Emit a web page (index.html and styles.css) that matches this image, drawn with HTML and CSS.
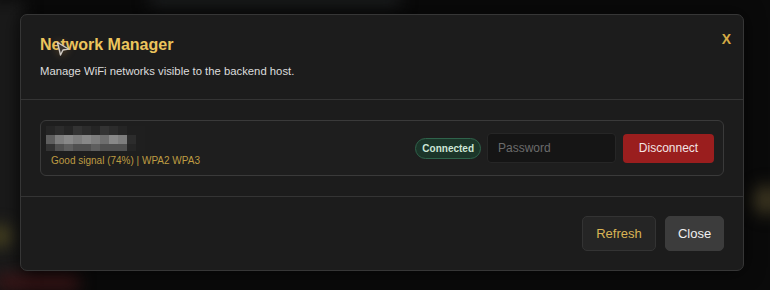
FILE: index.html
```html
<!DOCTYPE html>
<html lang="en">
<head>
<meta charset="utf-8">
<title>Network Manager</title>
<link rel="stylesheet" href="styles.css">
</head>
<body>
<div class="backdrop">
  <div class="blob blob-left"></div>
  <div class="blob blob-top"></div>
  <div class="blob blob-gold"></div>
  <div class="blob blob-red"></div>
  <div class="blob blob-right"></div>
</div>
<div class="modal">
  <div class="modal-header">
    <h2 class="title">Network Manager</h2>
    <p class="subtitle">Manage WiFi networks visible to the backend host.</p>
    <button class="x-btn">X</button>
  </div>
  <div class="modal-body">
    <div class="net-card">
      <div class="net-info">
        <div class="pixelated">
          <span class="c1"></span><span class="c2"></span><span class="c1"></span><span class="c3"></span><span class="c2"></span><span class="c1"></span><span class="c3"></span><span class="c2"></span><span class="c1"></span><span class="c0"></span><span class="c0"></span>
          <span class="c5"></span><span class="c7"></span><span class="c8"></span><span class="c7"></span><span class="c8"></span><span class="c7"></span><span class="c6"></span><span class="c8"></span><span class="c7"></span><span class="c2"></span><span class="c0"></span>
          <span class="c3"></span><span class="c4"></span><span class="c5"></span><span class="c4"></span><span class="c4"></span><span class="c5"></span><span class="c4"></span><span class="c4"></span><span class="c4"></span><span class="c1"></span><span class="c0"></span>
        </div>
        <div class="signal">Good signal (74%) | WPA2 WPA3</div>
      </div>
      <div class="net-actions">
        <span class="badge">Connected</span>
        <input class="pw" type="password" placeholder="Password">
        <button class="btn-danger">Disconnect</button>
      </div>
    </div>
  </div>
  <div class="modal-footer">
    <button class="btn btn-refresh">Refresh</button>
    <button class="btn btn-close">Close</button>
  </div>
  <div class="cursor">
    <svg width="14" height="16" viewBox="0 0 14 16"><path d="M1.5 1.5 L12.5 8 L7 9 L4.5 14 Z" fill="#3a3530" stroke="#cfcac4" stroke-width="1.4" stroke-linejoin="round"/></svg>
  </div>
</div>
</body>
</html>
```
FILE: styles.css
```css
* { box-sizing: border-box; }
html, body { margin: 0; padding: 0; }
body {
  width: 770px;
  height: 290px;
  overflow: hidden;
  background: #0a0a0a;
  font-family: "Liberation Sans", Arial, sans-serif;
  position: relative;
  padding: 14px 0 0 20px;
}
.backdrop { position: absolute; inset: 0; overflow: hidden; }
.blob { position: absolute; filter: blur(8px); }
.blob-left { left: -20px; top: 0; width: 45px; height: 290px; background: #1a1a1a; }
.blob-top { left: 150px; top: -10px; width: 250px; height: 18px; background: #1b1d1e; }
.blob-gold { left: -10px; top: 225px; width: 22px; height: 22px; background: #4a4420; border-radius: 50%; }
.blob-red { left: -5px; top: 274px; width: 85px; height: 16px; background: #3a1416; border-radius: 8px; }
.blob-right { left: 752px; top: 185px; width: 30px; height: 30px; background: #3a3420; border-radius: 50%; }

.modal {
  position: relative;
  width: 724px;
  height: 257px;
  background: #1c1c1c;
  border: 1px solid #363636;
  border-radius: 7px;
  display: flex;
  flex-direction: column;
  box-shadow: 0 0 20px rgba(0,0,0,0.6);
}
.modal-header {
  position: relative;
  padding: 20px 19px 19px;
  border-bottom: 1px solid #343434;
  height: 85px;
}
.title {
  margin: 0;
  font-size: 16px;
  line-height: 20px;
  font-weight: 700;
  color: #ecc55c;
}
.subtitle {
  margin: 9px 0 0;
  font-size: 11.3px;
  line-height: 14px;
  color: #dcdcdc;
}
.x-btn {
  position: absolute;
  top: 16px;
  right: 12px;
  background: none;
  border: 0;
  padding: 0;
  font-family: inherit;
  font-size: 14px;
  font-weight: 700;
  color: #d4aa45;
}
.modal-body {
  padding: 20px 19px;
  border-bottom: 1px solid #343434;
  height: 97px;
}
.net-card {
  height: 56px;
  border: 1px solid #3a3a3a;
  border-radius: 6px;
  background: #1e1e1e;
  display: flex;
  align-items: center;
  justify-content: space-between;
  padding: 0 9px 0 5px;
}
.net-info { display: flex; flex-direction: column; margin-top: -4px; }
.pixelated {
  display: grid;
  grid-template-columns: repeat(11, 9px);
  grid-template-rows: 9px 9px 7px;
  width: 99px;
}
.pixelated span { display: block; }
.c0 { background: #1f1f1f; }
.c1 { background: #252525; }
.c2 { background: #2c2c2c; }
.c3 { background: #333; }
.c4 { background: #505050; }
.c5 { background: #5e5e5e; }
.c6 { background: #6e6e6e; }
.c7 { background: #7d7d7d; }
.c8 { background: #888; }
.signal {
  margin: 4px 0 0 5px;
  font-size: 10px;
  line-height: 12px;
  color: #bf9c42;
}
.net-actions { display: flex; align-items: center; }
.badge {
  height: 21px;
  padding: 0 6px;
  display: inline-flex;
  align-items: center;
  border-radius: 11px;
  background: #1b3529;
  border: 1px solid #2f634b;
  color: #cde6d6;
  font-size: 10px;
  font-weight: 700;
}
.pw {
  margin-left: 6px;
  width: 129px;
  height: 30px;
  background: #151515;
  border: 1px solid #262626;
  border-radius: 4px;
  padding: 0 10px;
  font-family: inherit;
  font-size: 12px;
  color: #ddd;
  outline: none;
}
.pw::placeholder { color: #6b6b6b; }
.btn-danger {
  margin-left: 7px;
  width: 91px;
  height: 29px;
  border: 0;
  border-radius: 4px;
  background: #9a1e1e;
  color: #f3e4e4;
  font-family: inherit;
  font-size: 12px;
}
.modal-footer {
  flex: 1;
  display: flex;
  justify-content: flex-end;
  align-items: flex-start;
  padding: 19px 19px 0;
  gap: 9px;
}
.btn {
  height: 35px;
  border-radius: 5px;
  font-family: inherit;
  font-size: 13px;
}
.btn-refresh {
  width: 74px;
  background: #252525;
  border: 1px solid #333;
  color: #d9b454;
}
.btn-close {
  width: 59px;
  background: #3c3c3c;
  border: 1px solid #3c3c3c;
  color: #f0f0f0;
}
.cursor {
  position: absolute;
  left: 35px;
  top: 26px;
  width: 14px;
  height: 16px;
  filter: drop-shadow(0 0 4px rgba(200,140,60,0.45));
}
.cursor svg { display: block; }
```
